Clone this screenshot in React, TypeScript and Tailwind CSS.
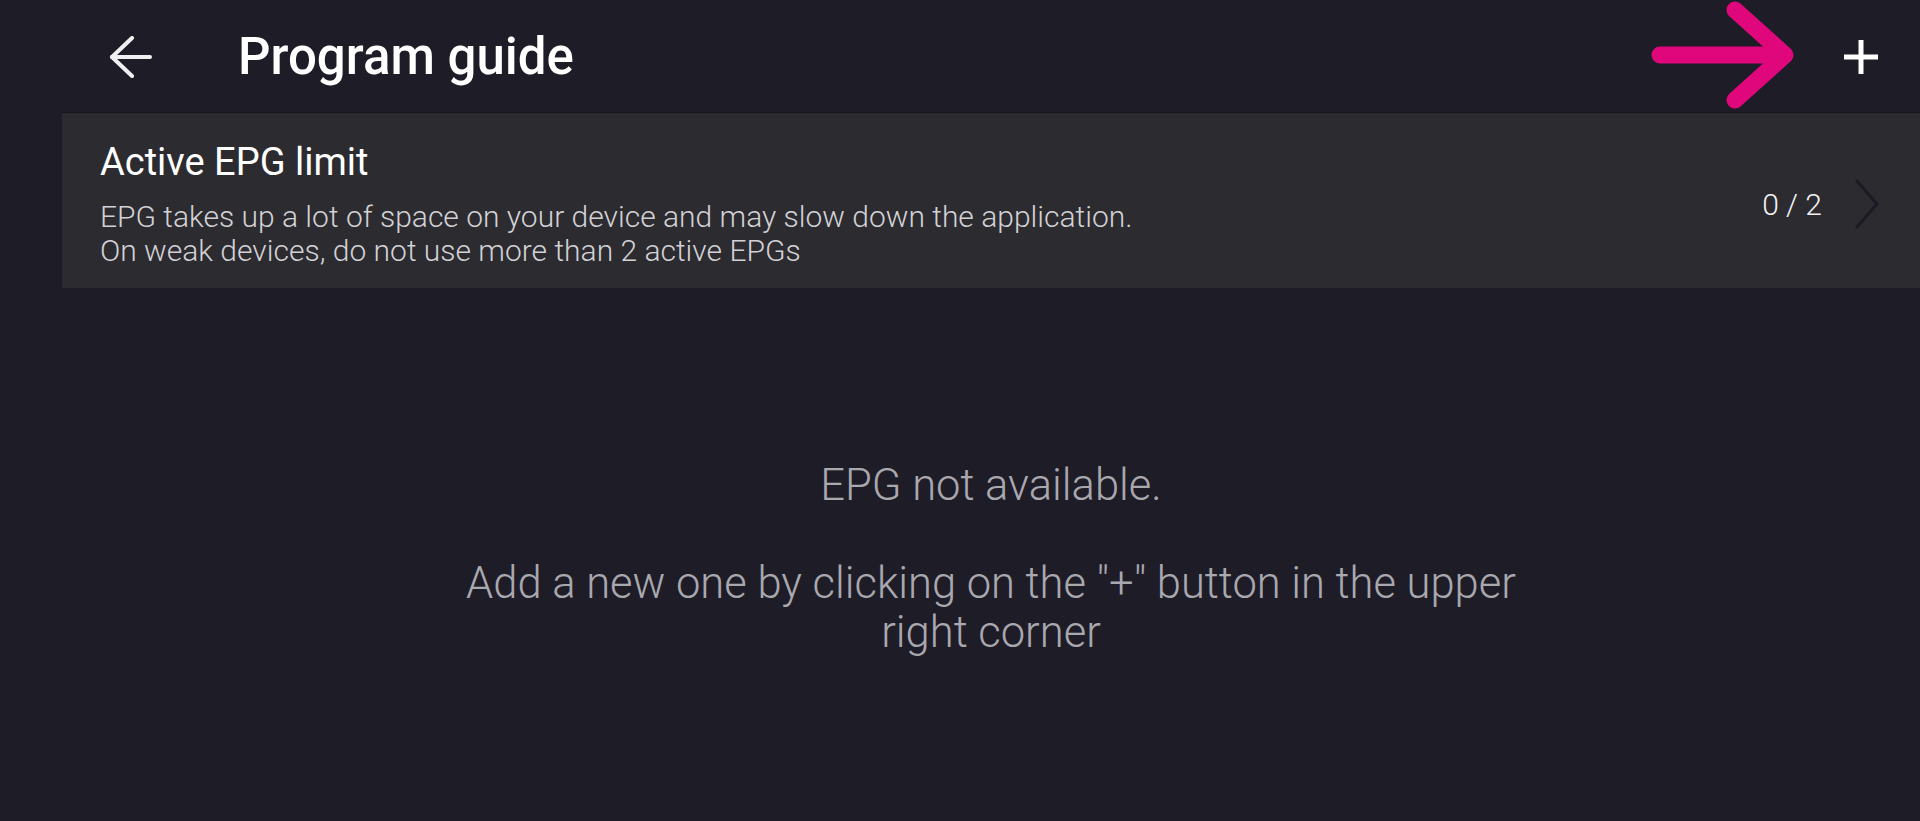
import React from "react";

const font = { fontFamily: "Roboto, 'Noto Sans', sans-serif" };

function BackArrow() {
  return (
    <svg width="44" height="42" viewBox="0 0 44 42" fill="none" stroke="#f0f0f2" strokeWidth="4" strokeLinecap="round" strokeLinejoin="round">
      <path d="M23 2 L3 21 L23 40" />
      <path d="M3 21 H41" />
    </svg>
  );
}

function PlusIcon() {
  return (
    <svg width="36" height="36" viewBox="0 0 36 36" fill="none" stroke="#ffffff" strokeWidth="5">
      <path d="M18 1 V35" />
      <path d="M1 18 H35" />
    </svg>
  );
}

function PinkArrow() {
  return (
    <svg width="170" height="112" viewBox="0 0 170 112" fill="none" stroke="#e0077d" strokeWidth="17" strokeLinecap="round" strokeLinejoin="round">
      <path d="M20 55 H144" />
      <path d="M95 10 L145 55 L95 100" />
    </svg>
  );
}

function Chevron() {
  return (
    <svg width="26" height="50" viewBox="0 0 26 50" fill="none" stroke="#1b1a23" strokeWidth="3" strokeLinecap="round" strokeLinejoin="round">
      <path d="M3 2 L23 25 L3 48" />
    </svg>
  );
}

export default function App() {
  return (
    <div className="relative flex h-[821px] w-full flex-col overflow-hidden bg-[#1e1d27]" style={font}>
      <header className="flex h-[113px] shrink-0 items-center pl-[109px] pr-[41px]">
        <button className="flex items-center">
          <BackArrow />
        </button>
        <h1 className="ml-[85px] text-[51px] font-medium leading-none text-white">Program guide</h1>
        <div className="flex-1" />
        <button className="flex items-center">
          <PlusIcon />
        </button>
      </header>

      <div className="absolute left-[1640px] top-0">
        <PinkArrow />
      </div>

      <main className="ml-[62px] flex flex-1 flex-col">
        <section className="flex items-center bg-[#2c2b30] pb-[20px] pl-[38px] pr-[40px] pt-[27px] shadow-[0_-1px_0_#16151d]">
          <div className="flex-1">
            <div className="text-[38px] leading-[44px] text-white">Active EPG limit</div>
            <div className="mt-[16px] text-[30px] font-light leading-[34px] text-[#d2d1d6]">
              EPG takes up a lot of space on your device and may slow down the application.
              <br />
              On weak devices, do not use more than 2 active EPGs
            </div>
          </div>
          <span className="mr-[32px] text-[30px] font-light text-[#f2f2f4]">0 / 2</span>
          <Chevron />
        </section>

        <div className="flex flex-1 items-center justify-center pt-[9px]">
          <p className="max-w-[1120px] whitespace-pre-line text-center text-[43.5px] font-light leading-[49px] text-[#a9a8af]">
            {"EPG not available.\n\nAdd a new one by clicking on the \"+\" button in the upper right corner"}
          </p>
        </div>
      </main>
    </div>
  );
}
